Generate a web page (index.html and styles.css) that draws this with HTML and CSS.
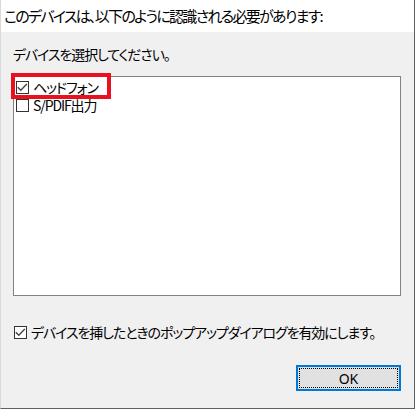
FILE: index.html
```html
<!DOCTYPE html>
<html lang="ja">
<head>
<meta charset="utf-8">
<link rel="stylesheet" href="styles.css">
</head>
<body>
<div class="window">
  <div class="title">このデバイスは、以下のように認識される必要があります:</div>
  <div class="content">
    <div class="prompt">デバイスを選択してください。</div>
    <div class="list">
      <div class="item">
        <span class="box"><svg viewBox="0 0 13 13" width="13" height="13"><polyline points="1.8,6.2 4.8,9.2 10.8,3" fill="none" stroke="#444" stroke-width="1.4"/></svg></span>
        <span class="label">ヘッドフォン</span>
      </div>
      <div class="item">
        <span class="box"></span>
        <span class="label">S/PDIF出力</span>
      </div>
      <div class="highlight"></div>
    </div>
    <div class="option">
      <span class="box"><svg viewBox="0 0 13 13" width="13" height="13"><polyline points="1.8,6.2 4.8,9.2 10.8,3" fill="none" stroke="#444" stroke-width="1.4"/></svg></span>
      <span class="label">デバイスを挿したときのポップアップダイアログを有効にします。</span>
    </div>
    <div class="actions">
      <button class="ok">OK</button>
    </div>
  </div>
</div>
</body>
</html>
```

FILE: styles.css
```css
html, body {
  margin: 0;
  padding: 0;
}
body {
  width: 415px;
  height: 409px;
  overflow: hidden;
  font-family: "Noto Sans CJK JP", "Noto Sans", sans-serif;
  font-size: 14px;
  font-feature-settings: "palt";
  letter-spacing: -1.1px;
  color: #000;
}
.window {
  box-sizing: border-box;
  width: 415px;
  height: 409px;
  background: #f0f0f0;
  border-left: 1px solid #d9d9d9;
  border-right: 1px solid #5f5f5f;
  border-bottom: 1px solid #5f5f5f;
}
.title {
  height: 32px;
  line-height: 32px;
  background: #fff;
  padding-left: 3px;
  white-space: nowrap;
  font-size: 15px;
  letter-spacing: -1.7px;
}
.content {
  padding: 0 13px 0 12px;
}
.prompt {
  padding-top: 12px;
  line-height: 20px;
  height: 20px;
}
.list {
  position: relative;
  box-sizing: border-box;
  margin-top: 12px;
  height: 220px;
  background: #fff;
  border: 1px solid #828282;
  padding-top: 1px;
}
.item {
  display: flex;
  align-items: center;
  height: 18px;
  padding-left: 2px;
  gap: 4px;
}
.box {
  box-sizing: border-box;
  width: 13px;
  height: 13px;
  border: 1px solid #333;
  background: #fff;
  display: flex;
  align-items: center;
  justify-content: center;
  flex: none;
}
.box svg {
  flex: none;
}
.label {
  line-height: 18px;
  white-space: nowrap;
}
.highlight {
  position: absolute;
  left: -3px;
  top: -4px;
  width: 100px;
  height: 26px;
  box-sizing: border-box;
  border: 4px solid #e8121f;
}
.option {
  display: flex;
  align-items: center;
  gap: 4px;
  margin-top: 26px;
  height: 20px;
  padding-left: 1px;
}
.actions {
  display: flex;
  justify-content: flex-end;
  margin-top: 23px;
}
.ok {
  box-sizing: border-box;
  width: 105px;
  height: 26px;
  background: #e1e1e1;
  border: 2px solid #0078d7;
  outline: 1px dotted #000;
  outline-offset: -4px;
  font-family: "Noto Sans", "Noto Sans CJK JP", sans-serif;
  font-size: 14px;
  letter-spacing: 0;
  color: #000;
  padding: 0;
}
```
